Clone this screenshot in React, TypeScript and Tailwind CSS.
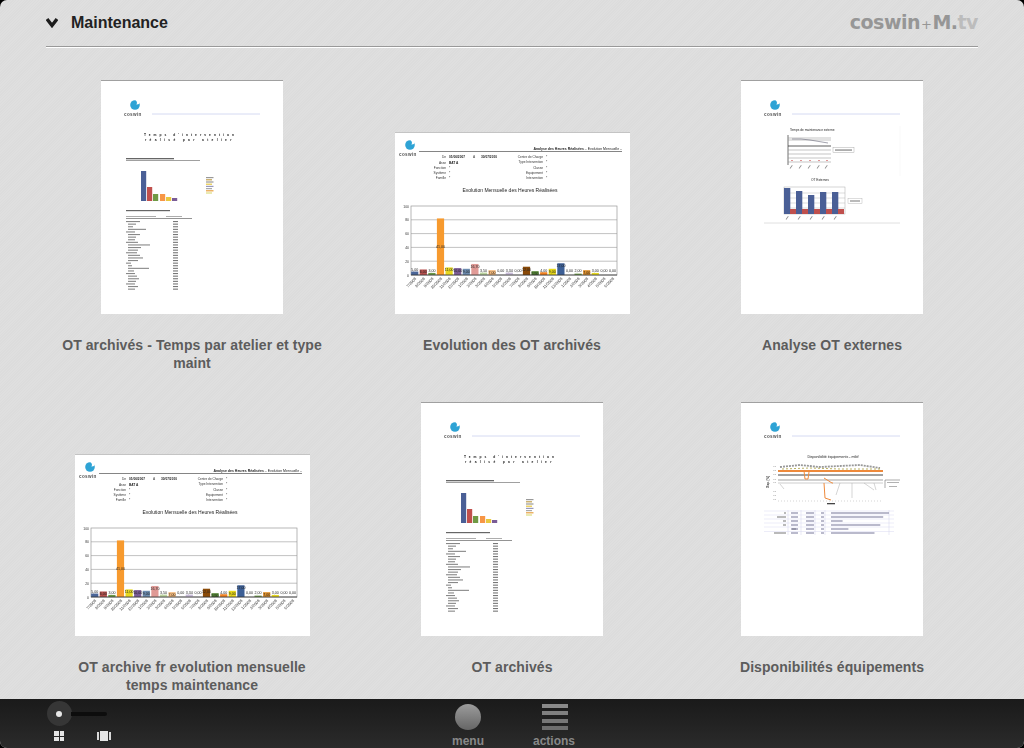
const tiles = [
  { title: 'OT archivés - Temps par atelier et type maint', doc: 'report' },
  { title: 'Evolution des OT archivés', doc: 'evolution' },
  { title: 'Analyse OT externes', doc: 'externes' },
  { title: 'OT archive fr evolution mensuelle temps maintenance', doc: 'evolution' },
  { title: 'OT archivés', doc: 'report' },
  { title: 'Disponibilités équipements', doc: 'dispo' },
];

function DocLogo({ x, y, line = true }: { x: number; y: number; line?: boolean }) {
  return (
    <g>
      <circle cx={x + 11} cy={y} r="4.8" fill="#2ea3d5" />
      <path d={`M${x + 11.5} ${y - 5} q2.5 2.5 0.8 4.6 q2.4 0 3.4 -1.4 l0 -3.2 z`} fill="#ffffff" />
      <text x={x} y={y + 10.5} fontSize="4.6" fontWeight="700" fill="#555" letterSpacing="0.35" fontFamily="Liberation Sans, sans-serif">
        coswin
      </text>
      {line && <line x1={x + 28} x2={x + 136} y1={y + 9} y2={y + 9} stroke="#d0d6f0" strokeWidth="0.9" />}
    </g>
  );
}

const reportRows = [14, 8, 5, 18, 9, 12, 8, 7, 12, 22, 13, 10, 11, 12, 15, 10, 5, 4, 21, 6, 9, 9, 11, 8, 9, 10, 7];

function ReportDoc() {
  const bars = [
    { x: 41, top: 91, color: '#4a5f96' },
    { x: 47, top: 107, color: '#c0504d' },
    { x: 53, top: 114, color: '#6f9a45' },
    { x: 60, top: 114, color: '#f79646' },
    { x: 66, top: 117, color: '#e8c840' },
    { x: 72, top: 118, color: '#7a5c96' },
  ];
  const legend = ['#999', '#c0a050', '#999', '#e8c840', '#9999bb', '#aaa', '#e8a040', '#dddd80'];
  return (
    <svg width="180" height="233" viewBox="2 1 180 233" className="blur-[0.4px]">
      <DocLogo x={24} y={25} />
      <text x="44" y="56" fontSize="3.3" fontWeight="700" letterSpacing="3" fill="#111" fontFamily="Liberation Sans, sans-serif">
        Temps d'intervention
      </text>
      <text x="45" y="60.5" fontSize="3.3" fontWeight="700" letterSpacing="3.3" fill="#111" fontFamily="Liberation Sans, sans-serif">
        réalisé par atelier
      </text>
      <rect x="26" y="78" width="48" height="1.3" fill="#666" />
      <rect x="26" y="80" width="74" height="0.7" fill="#777" />
      {bars.map((bar) => (
        <rect key={bar.x} x={bar.x} y={bar.top} width="5.2" height={121 - bar.top} fill={bar.color} />
      ))}
      {legend.map((color, i) => (
        <rect key={i} x="106" y={97 + i * 2.2} width={i % 2 ? 6 : 7.5} height="1.2" fill={color} />
      ))}
      <rect x="26" y="130" width="44" height="1.2" fill="#666" />
      <rect x="26" y="136" width="30" height="0.8" fill="#999" />
      <rect x="66" y="136" width="16" height="0.8" fill="#999" />
      <rect x="26" y="138" width="66" height="0.9" fill="#888" />
      {reportRows.map((w, i) => (
        <g key={i}>
          <rect x={i % 4 === 0 ? 26 : 28} y={141 + i * 2.6} width={w} height="1.1" fill="#888" />
          <rect x="73" y={141 + i * 2.6} width="5" height="1.1" fill="#777" />
        </g>
      ))}
    </svg>
  );
}

const monthBars = [
  { v: 5, c: '#4a6598', l: '5,00' },
  { v: 8, c: '#b9524f', l: '6,00' },
  { v: 3, c: '#6c9a48', l: '3,00' },
  { v: 82, c: '#f79a2e', l: '41,00' },
  { v: 11, c: '#e6d820', l: '11,00' },
  { v: 10, c: '#7a5c96', l: '10,00' },
  { v: 9, c: '#6d8cb0', l: '9,00' },
  { v: 16, c: '#e09a96', l: '16,70' },
  { v: 3.5, c: '#bcd4a0', l: '3,50' },
  { v: 7, c: '#f5b97a', l: '7,00' },
  { v: 0, c: '#888', l: '0,00' },
  { v: 3.5, c: '#c8bcd8', l: '3,34' },
  { v: 0, c: '#888', l: '0,00' },
  { v: 12, c: '#8a4a08', l: '12,00' },
  { v: 5.5, c: '#4f8030', l: '5,50' },
  { v: 4, c: '#f08020', l: '4,00' },
  { v: 9, c: '#e8d818', l: '9,00' },
  { v: 17, c: '#3c5f96', l: '17,00' },
  { v: 0, c: '#888', l: '0,00' },
  { v: 2, c: '#6c9a48', l: '2,00' },
  { v: 7, c: '#e0902a', l: '7,00' },
  { v: 3, c: '#e6d820', l: '3,00' },
  { v: 0, c: '#888', l: '0,00' },
  { v: 0, c: '#888', l: '0,00' },
];

const filterLeft = [
  ['Asse', 'BAT A'],
  ['Fonction', '*'],
  ['Système', '*'],
  ['Famille', '*'],
];
const filterRight = ['Centre de Charge', 'Type Intervention', 'Classe', 'Equipement', 'Intervention'];

function EvolutionDoc() {
  return (
    <svg width="235" height="181" viewBox="2 3 235 181" fontFamily="Liberation Sans, sans-serif" className="blur-[0.4px]">
      <DocLogo x={6} y={15} line={false} />
      <text x="229" y="19.5" textAnchor="end" fontSize="3.5" fill="#222">
        <tspan fontWeight="700">Analyse des Heures Réalisées</tspan> – Evolution Mensuelle –
      </text>
      <line x1="26" x2="229" y1="21.5" y2="21.5" stroke="#333" strokeWidth="0.6" />
      <text x="53" y="28" textAnchor="end" fontSize="3.2" fill="#333">De</text>
      <text x="56" y="28" fontSize="3.2" fontWeight="700" fill="#222">01/06/2007</text>
      <text x="80" y="28" fontSize="3.2" fill="#333">A</text>
      <text x="88" y="28" fontSize="3.2" fontWeight="700" fill="#222">30/07/2010</text>
      {filterLeft.map(([label, value], i) => (
        <g key={label}>
          <text x="53" y={33.5 + i * 5.3} textAnchor="end" fontSize="3.2" fill="#333">{label}</text>
          <text x="56" y={33.5 + i * 5.3} fontSize="3.2" fontWeight={i === 0 ? 700 : 400} fill="#222">{value}</text>
        </g>
      ))}
      {filterRight.map((label, i) => (
        <g key={label}>
          <text x="150" y={28 + i * 5.3} textAnchor="end" fontSize="3.2" fill="#333">{label}</text>
          <text x="153" y={28 + i * 5.3} fontSize="3.2" fill="#222">*</text>
        </g>
      ))}
      <text x="117" y="62" textAnchor="middle" fontSize="5" fill="#222">Evolution Mensuelle des Heures Réalisées</text>
      <rect x="18" y="76" width="206" height="69" fill="#ffffff" stroke="#999" strokeWidth="0.7" />
      {[89.8, 103.6, 117.4, 131.2].map((y) => (
        <line key={y} x1="18" x2="224" y1={y} y2={y} stroke="#999" strokeWidth="0.6" />
      ))}
      {[100, 80, 60, 40, 20, 0].map((v, i) => (
        <text key={v} x="16" y={77.5 + i * 13.8} textAnchor="end" fontSize="3.4" fill="#333">{v}</text>
      ))}
      {monthBars.map((bar, i) => {
        const x = 21.7 + i * 8.6;
        const h = bar.v * 0.69;
        return (
          <g key={i}>
            <rect x={x - 3.6} y={145 - h} width="7.2" height={h} fill={bar.c} />
            <text x={x} y={bar.v > 20 ? 118 : 145 - Math.max(h, 2.5) + (bar.v > 5 ? 4 : -0.5)} textAnchor="middle" fontSize="3.6" fill="#222">
              {bar.l}
            </text>
            <text transform={`translate(${x + 2} 149) rotate(-45)`} textAnchor="end" fontSize="4" fill="#333">
              {(i + 6) % 12 + 1}/2008
            </text>
          </g>
        );
      })}
      <line x1="18" x2="224" y1="145" y2="145" stroke="#333" strokeWidth="0.8" />
    </svg>
  );
}

function ExternesDoc() {
  const blue = [108, 111, 115, 112, 112];
  return (
    <svg width="180" height="233" viewBox="2 1 180 233" fontFamily="Liberation Sans, sans-serif" className="blur-[0.4px]">
      <DocLogo x={24} y={25} />
      <text x="50" y="51" fontSize="3.2" fill="#222">Temps de maintenance externe</text>
      <line x1="48" x2="48" y1="55" y2="85" stroke="#333" strokeWidth="0.7" />
      {[58, 60, 66, 70, 74, 78, 82].map((y) => (
        <line key={y} x1="48" x2="91" y1={y} y2={y} stroke={y === 66 ? '#333' : '#888'} strokeWidth={y === 66 ? 0.8 : 0.5} />
      ))}
      <path d="M52 59 L61 59 L70 60 L79 61.5 L88 63" fill="none" stroke="#667" strokeWidth="0.6" />
      {[52, 61, 70, 79, 87].map((x) => (
        <g key={x}>
          <rect x={x - 1} y="80" width="2" height="0.9" fill="#d88" />
          <rect x={x} y="85" width="0.8" height="4" fill="#888" transform={`rotate(35 ${x} 85)`} />
        </g>
      ))}
      <rect x="93" y="67.5" width="21" height="5" fill="#fff" stroke="#999" strokeWidth="0.4" />
      <rect x="95" y="69.5" width="17" height="1.1" fill="#777" />
      <line x1="160" x2="160" y1="46" y2="96" stroke="#f0f0f0" strokeWidth="0.5" />
      <text x="71" y="101" fontSize="3.2" fill="#222">OT Externes</text>
      <rect x="44" y="107" width="61" height="27" fill="#fff" stroke="#aaa" strokeWidth="0.5" />
      {[113, 118, 123, 128].map((y) => (
        <line key={y} x1="44" x2="105" y1={y} y2={y} stroke="#aaa" strokeWidth="0.4" />
      ))}
      {blue.map((top, i) => (
        <g key={i}>
          <rect x={44 + i * 12} y={top} width="6.3" height={134 - top} fill="#4a5f96" />
          <rect x={50 + i * 12} y="129" width="6" height="5" fill="#c0504d" />
          <rect x={48 + i * 12} y="136" width="0.8" height="4" fill="#888" transform={`rotate(35 ${48 + i * 12} 136)`} />
        </g>
      ))}
      <rect x="108" y="118.5" width="14" height="5" fill="#fff" stroke="#aaa" strokeWidth="0.4" />
      <rect x="110" y="120.5" width="10" height="1" fill="#777" />
      <line x1="24" x2="160" y1="143" y2="143" stroke="#d8d8d8" strokeWidth="0.8" />
    </svg>
  );
}

const dispoRows = [
  { x: 44, w: 2, t: 40 },
  { x: 37, w: 9, t: 36 },
  { x: 43, w: 3, t: 8 },
  { x: 43, w: 3, t: 34 },
  { x: 52, w: 4, t: 12 },
  { x: 34, w: 12, t: 30 },
];

function DispoDoc() {
  return (
    <svg width="180" height="233" viewBox="2 1 180 233" fontFamily="Liberation Sans, sans-serif" className="blur-[0.4px]">
      <DocLogo x={24} y={25} />
      <text x="93" y="55.5" textAnchor="middle" fontSize="3.6" fill="#222">Disponibilité équipements - mtbf</text>
      <text transform="translate(29 86) rotate(-90)" fontSize="2.8" fontWeight="700" fill="#333">Disp. (%)</text>
      {[65, 69, 73, 78, 81, 90, 94, 98].map((y) => (
        <text key={y} x="36" y={y} textAnchor="end" fontSize="2.4" fill="#666">99</text>
      ))}
      <path d="M40 65 L60 63 L80 65 L100 64 L120 63 L140 66" fill="none" stroke="#999" strokeWidth="1.8" strokeDasharray="2 1" />
      <path d="M42 67 L70 66 L100 67 L140 67" fill="none" stroke="#b8b060" strokeWidth="1" strokeDasharray="2 2" />
      <line x1="38" x2="143" y1="69" y2="69" stroke="#ee8a3c" strokeWidth="1.8" />
      <line x1="38" x2="143" y1="73" y2="73" stroke="#444" strokeWidth="1" />
      <line x1="38" x2="143" y1="78" y2="78" stroke="#666" strokeWidth="0.6" />
      <line x1="38" x2="143" y1="81" y2="81" stroke="#999" strokeWidth="0.5" />
      <path d="M64 69 L65 77 L68 77 L69 70 M84 76 L92 81 L93 81 M84 81 L85 96 L91 98" fill="none" stroke="#ee8a3c" strokeWidth="1" />
      <path d="M40 82 L44 87 M100 81 L96 93 M112 81 L112 96 M124 81 L134 88 M134 81 L136 88" fill="none" stroke="#aaa" strokeWidth="0.5" />
      <line x1="38" x2="143" y1="99" y2="99" stroke="#bbb" strokeWidth="0.6" strokeDasharray="1 2" />
      <rect x="87" y="101" width="8" height="1.3" fill="#444" />
      <path d="M145 86 L145 78 L160 78" fill="none" stroke="#555" strokeWidth="0.5" />
      <rect x="147" y="80" width="12" height="0.9" fill="#aaa" />
      <rect x="149" y="84" width="8" height="0.9" fill="#aaa" />
      {[109, 113, 117, 121, 125, 129.5].map((y) => (
        <line key={y} x1="24" x2="154" y1={y} y2={y} stroke="#d8d8f0" strokeWidth="0.5" />
      ))}
      {[48, 61, 75, 85, 149].map((x) => (
        <line key={x} x1={x} x2={x} y1="108" y2="133" stroke="#d0d0e8" strokeWidth="0.5" />
      ))}
      {dispoRows.map((row, i) => (
        <g key={i}>
          <rect x={row.x} y={110.5 + i * 4} width={row.w} height="1" fill="#777" />
          <rect x="51" y={110.5 + i * 4} width="7" height="1" fill="#77779a" />
          <rect x="66" y={110.5 + i * 4} width="8" height="1" fill="#77779a" />
          <rect x="81" y={110.5 + i * 4} width="3" height="1" fill="#77779a" />
          <rect x="91" y={110.5 + i * 4} width={row.t * 1.45} height="1" fill="#77779a" />
        </g>
      ))}
    </svg>
  );
}

function Thumb({ doc }: { doc: string }) {
  if (doc === 'evolution') {
    return (
      <div className="w-[235px] h-[182px] bg-white border-t border-[#c4c4c4] overflow-hidden">
        <EvolutionDoc />
      </div>
    );
  }
  return (
    <div className="w-[182px] h-[234px] bg-white border-t border-[#a0a0a0] flex justify-center overflow-hidden">
      {doc === 'report' && <ReportDoc />}
      {doc === 'externes' && <ExternesDoc />}
      {doc === 'dispo' && <DispoDoc />}
    </div>
  );
}

export default function App() {
  return (
    <div className="w-[1024px] h-[748px] bg-black overflow-hidden font-['Liberation_Sans',Arial,sans-serif]">
      <div className="h-full rounded-[7px] overflow-hidden flex flex-col bg-[#dedede] bg-[repeating-linear-gradient(135deg,#dfdfdf_0px,#dfdfdf_1px,#dcdcdc_1px,#dcdcdc_2px)]">
        <header className="mx-[46px] h-[48px] shrink-0 flex items-center justify-between border-b border-white shadow-[inset_0_-1px_0_#999]">
          <div className="flex items-center gap-[13px] -mt-[2px]">
            <svg width="12" height="12" viewBox="0 0 12 12" className="block">
              <path d="M1 2 L6 8.5 L11 2" fill="none" stroke="#1c1c1c" strokeWidth="3.4" />
            </svg>
            <h1 className="text-base font-bold text-[#222] leading-none">Maintenance</h1>
          </div>
          <div className="-mt-[2px] flex items-baseline font-['DejaVu_Sans',sans-serif] font-bold text-[19px] leading-none tracking-[-0.5px] text-[#969696]">
            coswin
            <span className="font-normal text-[13px] mx-[1px]">+</span>
            M.
            <span className="text-[#bcbcbc]">tv</span>
          </div>
        </header>

        <main className="flex-1 grid grid-cols-3 grid-rows-[322px_322px] px-8 pt-[32px] overflow-hidden">
          {tiles.map((tile) => (
            <div key={tile.title} className="flex flex-col items-center">
              <div className="h-[234px] shrink-0 flex items-end">
                <Thumb doc={tile.doc} />
              </div>
              <p className="mt-[22px] w-[270px] text-center text-sm font-bold leading-[18px] tracking-[0.08px] text-[#5c5c5c]">
                {tile.title}
              </p>
            </div>
          ))}
        </main>

        <footer className="h-[49px] shrink-0 flex bg-gradient-to-b from-[#1a1a1a] to-[#2b2b2b] overflow-hidden">
          <div className="w-[438px] pl-[46px] pt-[2px]">
            <div className="flex items-center">
              <div className="w-[25px] h-[25px] ml-[0.5px] rounded-full bg-[#363636] flex items-center justify-center">
                <div className="w-[6px] h-[6px] rounded-full bg-[#e8e8e8]" />
              </div>
              <div className="w-[36px] h-[4px] -ml-px rounded-r-full bg-[#0d0d0d]" />
            </div>
            <div className="flex items-center mt-[5px]">
              <div className="ml-[8px] grid grid-cols-2 gap-[1px] w-[10px]">
                <div className="h-[4.5px] bg-[#e4e4e4]" />
                <div className="h-[4.5px] bg-[#e4e4e4]" />
                <div className="h-[4.5px] bg-[#e4e4e4]" />
                <div className="h-[4.5px] bg-[#e4e4e4]" />
              </div>
              <div className="ml-[33px] flex items-center gap-[1px]">
                <div className="w-[2px] h-[8px] bg-[#d8d8d8]" />
                <div className="w-[8px] h-[10px] bg-[#e4e4e4]" />
                <div className="w-[2px] h-[8px] bg-[#d8d8d8]" />
              </div>
            </div>
          </div>
          <div className="w-[60px] flex flex-col items-center pt-[5px]">
            <div className="w-[26px] h-[26px] rounded-full bg-gradient-to-b from-[#9c9c9c] to-[#666666]" />
            <span className="mt-[4px] text-xs font-bold leading-[14px] text-[#888]">menu</span>
          </div>
          <div className="ml-[26px] w-[60px] flex flex-col items-center pt-[5px]">
            <div className="ml-[2px] w-[26px] h-[26px] flex flex-col justify-between">
              <div className="h-[4px] bg-[#8a8a8a]" />
              <div className="h-[4px] bg-[#808080]" />
              <div className="h-[4px] bg-[#777777]" />
              <div className="h-[4px] bg-[#6e6e6e]" />
            </div>
            <span className="mt-[4px] text-xs font-bold leading-[14px] text-[#888]">actions</span>
          </div>
        </footer>
      </div>
    </div>
  );
}
